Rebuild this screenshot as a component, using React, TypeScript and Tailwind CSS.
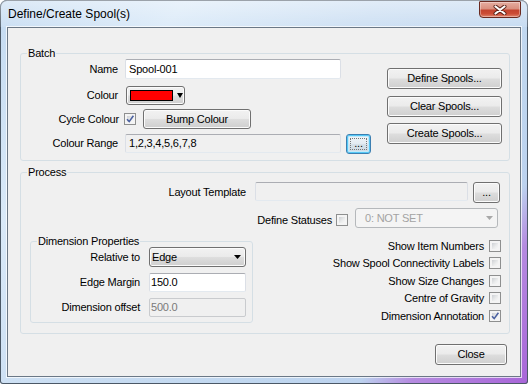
import React from "react";

const btnCls =
  "border border-[#707070] rounded-[3px] bg-[linear-gradient(to_bottom,#f2f2f2_0%,#ebebeb_47%,#dddddd_53%,#cfcfcf_100%)] shadow-[inset_0_0_0_1px_#fbfbfb] flex items-center justify-center text-black shrink-0";

const tbCls =
  "border border-t-[#abadb3] border-x-[#dbdfe6] border-b-[#e3e9ef] rounded-[2px] flex items-center shrink-0";

function Check({ checked }: { checked?: boolean }) {
  return (
    <span className="relative w-[12px] h-[12px] shrink-0 border border-[#8e8f8f] bg-[#f4f4f4] p-[2px] flex">
      <span className="flex-1 bg-[linear-gradient(135deg,#cdd0d4_0%,#eceded_60%,#f7f7f7_100%)]" />
      {checked && (
        <svg className="absolute left-[0px] top-[0px]" width="10" height="10" viewBox="0 0 10 10">
          <path d="M2 5.2 L4.2 7.6 L8.4 1.8" fill="none" stroke="#4b61a0" strokeWidth="1.6" />
        </svg>
      )}
    </span>
  );
}

function Legend({ children }: { children: React.ReactNode }) {
  return (
    <span className="absolute top-[-8px] left-[6px] px-[1px] bg-[#f0f0f0] leading-[14px]">
      {children}
    </span>
  );
}

function Arrow({ color = "#000" }: { color?: string }) {
  return (
    <svg width="7" height="4" viewBox="0 0 7 4" className="shrink-0">
      <path d="M0 0 L7 0 L3.5 4 Z" fill={color} />
    </svg>
  );
}

export default function App() {
  return (
    <div className="w-[528px] h-[384px] overflow-hidden rounded-t-[7px] rounded-b-[3px] shadow-[inset_0_0_0_1px_#4b5866] bg-[linear-gradient(130deg,#c3daf1_0%,#d9e9f8_22%,#c9ddf2_45%,#bfd6ef_70%,#bcd2ee_80%,#b58be0_86%,#a865d8_100%)] font-['Liberation_Sans',Arial,sans-serif] text-[11px] tracking-[-0.2px] text-black flex flex-col">
      {/* title bar */}
      <div className="h-[27px] flex items-start justify-between bg-[linear-gradient(to_bottom,rgba(255,255,255,0.45),rgba(255,255,255,0.1))] rounded-t-[7px]">
        <span className="pl-[8px] pt-[7px] text-[12px] tracking-[0px] leading-[14px]">Define/Create Spool(s)</span>
        <div className="mt-[1px] mr-[7px] w-[42px] h-[17px] rounded-b-[4px] rounded-t-[1px] border border-[#6a2a20] bg-[linear-gradient(to_bottom,#e6ada0_0%,#d9907f_45%,#c4442f_55%,#cc4d36_78%,#e0856d_100%)] shadow-[inset_0_0_0_1px_rgba(255,255,255,0.35)] flex items-center justify-center">
          <svg width="14" height="10" viewBox="0 0 14 10">
            <path d="M2.5 1.5 L11.5 8.5 M11.5 1.5 L2.5 8.5" stroke="#5a2016" strokeWidth="4" strokeLinecap="round" />
            <path d="M2.5 1.5 L11.5 8.5 M11.5 1.5 L2.5 8.5" stroke="#ffffff" strokeWidth="2.2" strokeLinecap="round" />
          </svg>
        </div>
      </div>

      {/* client area */}
      <div className="ml-[7px] w-[514px] h-[350px] border border-[#6b7886] bg-[#f0f0f0] flex flex-col shadow-[0_0_0_1px_rgba(255,255,255,0.7)]">
        {/* Batch */}
        <div className="relative ml-[12px] mt-[25px] w-[490px] h-[108px] border border-[#d5dfe5] rounded-[3px] flex">
          <Legend>Batch</Legend>
          <div className="flex flex-col pt-[5px]">
            <div className="flex items-center h-[20px]">
              <span className="w-[97px] text-right">Name</span>
              <div className={`${tbCls} ml-[7px] w-[216px] h-[20px] bg-white pl-[3px]`}>Spool-001</div>
            </div>
            <div className="flex items-center h-[19px] mt-[7px]">
              <span className="w-[97px] text-right">Colour</span>
              <div className={`${btnCls} ml-[8px] w-[59px] h-[19px] !justify-start pl-[3px]`}>
                <span className="w-[43px] h-[11px] bg-[#ff0000] border border-black shrink-0" />
                <span className="ml-[4px] flex">
                  <svg width="6" height="5" viewBox="0 0 6 5">
                    <path d="M0 0 L6 0 L3 5 Z" fill="#000" />
                  </svg>
                </span>
              </div>
            </div>
            <div className="flex items-center h-[20px] mt-[4px]">
              <span className="w-[98px] text-right">Cycle Colour</span>
              <span className="ml-[5px] flex">
                <Check checked />
              </span>
              <div className={`${btnCls} ml-[7px] w-[108px] h-[20px]`}>Bump Colour</div>
            </div>
            <div className="flex items-center h-[19px] mt-[5px]">
              <span className="w-[97px] text-right">Colour Range</span>
              <div className={`${tbCls} ml-[7px] w-[216px] h-[19px] bg-[#f0f0f0] pl-[3px]`}>1,2,3,4,5,6,7,8</div>
              <div className="relative ml-[5px] w-[25px] h-[20px] border border-[#3c7fb1] rounded-[3px] bg-[linear-gradient(to_bottom,#f1f6f9_0%,#e4ecf2_47%,#d6e1e9_53%,#ccdae4_100%)] shadow-[inset_0_0_0_1px_#55c8f6,inset_0_0_0_2px_#c4e8f8] flex items-center justify-center">
                <span className="absolute inset-[3px] border border-dotted border-[#777]" />
                <span className="leading-none">...</span>
              </div>
            </div>
          </div>
          <div className="flex flex-col ml-[16px] pt-[14px]">
            <div className={`${btnCls} w-[115px] h-[21px]`}>Define Spools...</div>
            <div className={`${btnCls} w-[115px] h-[21px] mt-[7px]`}>Clear Spools...</div>
            <div className={`${btnCls} w-[115px] h-[21px] mt-[6px]`}>Create Spools...</div>
          </div>
        </div>

        {/* Process */}
        <div className="relative ml-[12px] mt-[11px] w-[490px] h-[162px] border border-[#d5dfe5] rounded-[3px] flex flex-col">
          <Legend>Process</Legend>
          <div className="flex items-start mt-[9px]">
            <span className="w-[225px] h-[21px] flex items-center justify-end">Layout Template</span>
            <div className={`${tbCls} ml-[9px] w-[213px] h-[19px] bg-[#f0f0f0]`} />
            <div className={`${btnCls} ml-[5px] w-[27px] h-[21px]`}>
              <span className="leading-none">...</span>
            </div>
          </div>
          <div className="flex items-start mt-[5px]">
            <span className="w-[311px] h-[24px] flex items-center justify-end">Define Statuses</span>
            <span className="ml-[4px] mt-[6px] flex">
              <Check />
            </span>
            <div className="ml-[7px] w-[143px] h-[20px] border border-[#b5b8bb] rounded-[3px] bg-[#f4f4f4] flex items-center justify-between pl-[9px] pr-[4px] text-[#a3a3a3]">
              <span>0: NOT SET</span>
              <Arrow color="#a8a8a8" />
            </div>
          </div>
          <div className="flex items-start mt-[8px]">
            <div className="relative ml-[9px] mt-[1px] w-[223px] h-[82px] border border-[#d5dfe5] rounded-[3px] flex flex-col">
              <Legend>Dimension Properties</Legend>
              <div className="flex items-center mt-[5px]">
                <span className="w-[109px] text-right">Relative to</span>
                <div className={`${btnCls} ml-[9px] w-[97px] h-[20px] !justify-between pl-[2px] pr-[4px]`}>
                  <span>Edge</span>
                  <Arrow />
                </div>
              </div>
              <div className="flex items-center mt-[6px]">
                <span className="w-[109px] text-right">Edge Margin</span>
                <div className={`${tbCls} ml-[9px] w-[97px] h-[19px] bg-white pl-[1px]`}>150.0</div>
              </div>
              <div className="flex items-center mt-[6px]">
                <span className="w-[109px] text-right">Dimension offset</span>
                <div className="ml-[9px] w-[97px] h-[19px] border border-[#c9cbce] rounded-[2px] bg-[#f0f0f0] pl-[1px] flex items-center text-[#7a7a7a]">500.0</div>
              </div>
            </div>
            <div className="ml-auto mr-[8px] flex flex-col items-end">
              <div className="flex items-center h-[12px] gap-[5px]">
                <span>Show Item Numbers</span>
                <Check />
              </div>
              <div className="flex items-center h-[12px] gap-[5px] mt-[5px]">
                <span>Show Spool Connectivity Labels</span>
                <Check />
              </div>
              <div className="flex items-center h-[12px] gap-[5px] mt-[6px]">
                <span>Show Size Changes</span>
                <Check />
              </div>
              <div className="flex items-center h-[12px] gap-[5px] mt-[5px]">
                <span>Centre of Gravity</span>
                <Check />
              </div>
              <div className="flex items-center h-[12px] gap-[5px] mt-[6px]">
                <span>Dimension Annotation</span>
                <Check checked />
              </div>
            </div>
          </div>
        </div>

        <div className={`${btnCls} self-end mr-[13px] mt-[10px] w-[72px] h-[21px]`}>Close</div>
      </div>
    </div>
  );
}
